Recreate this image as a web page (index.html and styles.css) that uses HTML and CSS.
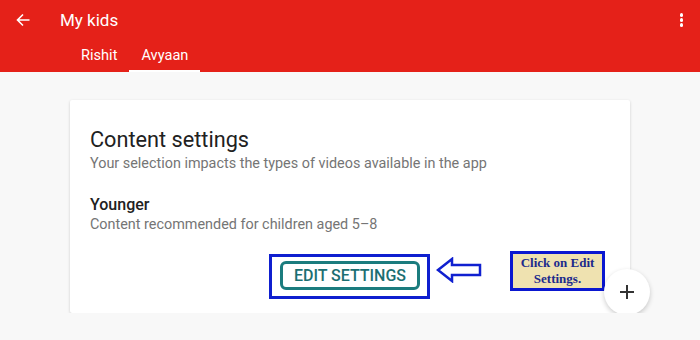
FILE: index.html
```html
<!DOCTYPE html>
<html lang="en">
<head>
    <meta charset="UTF-8">
    <meta name="viewport" content="width=device-width, initial-scale=1.0">
    <title>My kids</title>
    <link rel="stylesheet" href="styles.css">
</head>
<body>
    <header>
        <div class="topbar">
            <svg class="back" width="14" height="14" viewBox="0 0 14 14">
                <path d="M13.5 7H1.5M7 1.5L1.5 7L7 12.5" fill="none" stroke="#fff" stroke-width="1.6"/>
            </svg>
            <h1>My kids</h1>
            <div class="more">
                <span></span><span></span><span></span>
            </div>
        </div>
        <nav class="tabs">
            <div class="tab">Rishit</div>
            <div class="tab active">Avyaan</div>
        </nav>
    </header>

    <div class="card">
        <h2>Content settings</h2>
        <p class="sub">Your selection impacts the types of videos available in the app</p>

        <h3>Younger</h3>
        <p class="sub">Content recommended for children aged 5&ndash;8</p>

        <div class="actions">
            <div class="highlight">
                <button type="button">EDIT SETTINGS</button>
            </div>
            <svg class="pointer" width="46" height="26" viewBox="0 0 46 26">
                <path d="M2 13L16 2v6h28v10H16v6z" fill="none" stroke="#1020d0" stroke-width="2.5" stroke-linejoin="miter"/>
            </svg>
            <div class="note">Click on Edit<br>Settings.</div>
        </div>

        <div class="fab">
            <svg width="16" height="16" viewBox="0 0 16 16">
                <path d="M8 1v14M1 8h14" stroke="#333" stroke-width="2"/>
            </svg>
        </div>
    </div>
</body>
</html>
```

FILE: styles.css
```css
body {
    font-family: Roboto, "Noto Sans", sans-serif;
    margin: 0;
    padding: 0;
    background-color: #f8f8f8;
    color: #212121;
}

header {
    background: #e52119;
    color: #fff;
    height: 72px;
}

.topbar {
    display: flex;
    align-items: center;
    height: 40px;
    padding: 0 14px 0 16px;
}

.back {
    margin-right: 30px;
}

.topbar h1 {
    margin: 0;
    font-size: 17px;
    font-weight: normal;
    flex: 1;
}

.more {
    display: flex;
    flex-direction: column;
    gap: 1.5px;
    margin-right: 3px;
}

.more span {
    width: 3.5px;
    height: 3.5px;
    border-radius: 50%;
    background: #fff;
}

.tabs {
    display: flex;
    padding-left: 69px;
    height: 32px;
}

.tab {
    padding: 6px 12px 0 12px;
    font-size: 14.6px;
    color: #fff;
    box-sizing: border-box;
}

.tab.active {
    border-bottom: 2px solid #fff;
}

.card {
    position: relative;
    width: 560px;
    height: 213px;
    margin: 28px 0 0 70px;
    padding: 26px 20px 0 20px;
    box-sizing: border-box;
    background: #fff;
    border-radius: 2px;
    box-shadow: 0 1px 3px rgba(0, 0, 0, 0.18);
}

.card h2 {
    margin: 0;
    font-size: 21.7px;
    font-weight: normal;
    line-height: 28px;
}

.sub {
    margin: 0;
    font-size: 14.4px;
    line-height: 20px;
    color: #757575;
}

.card h3 {
    margin: 21px 0 0 0;
    font-size: 16px;
    font-weight: 500;
    line-height: 20px;
}

.actions {
    display: flex;
    align-items: flex-start;
    justify-content: flex-end;
    margin-top: 16px;
    padding-right: 5px;
}

.highlight {
    border: 3px solid #0f1fcf;
    padding: 4px 7px 6px 8px;
    margin-top: 3px;
}

button {
    width: 140px;
    height: 29px;
    padding: 0;
    border: 3px solid #1b7c7e;
    border-radius: 6px;
    background: #fff;
    color: #1b6f72;
    font-family: Roboto, sans-serif;
    font-size: 16px;
    font-weight: 500;
    line-height: 22px;
    cursor: pointer;
}

.pointer {
    margin: 6px 28px 0 6px;
}

.note {
    width: 95px;
    height: 40px;
    box-sizing: border-box;
    border: 3px solid #0a17d0;
    background: #efe2b0;
    color: #1c2a8c;
    font-family: "Liberation Serif", "DejaVu Serif", serif;
    font-weight: bold;
    font-size: 13px;
    line-height: 16px;
    text-align: center;
    padding-top: 1px;
}

.fab {
    position: absolute;
    left: 534px;
    top: 169px;
    width: 46px;
    height: 46px;
    border-radius: 50%;
    background: #fff;
    box-shadow: 0 2px 5px rgba(0, 0, 0, 0.2);
    display: flex;
    align-items: center;
    justify-content: center;
}
```
